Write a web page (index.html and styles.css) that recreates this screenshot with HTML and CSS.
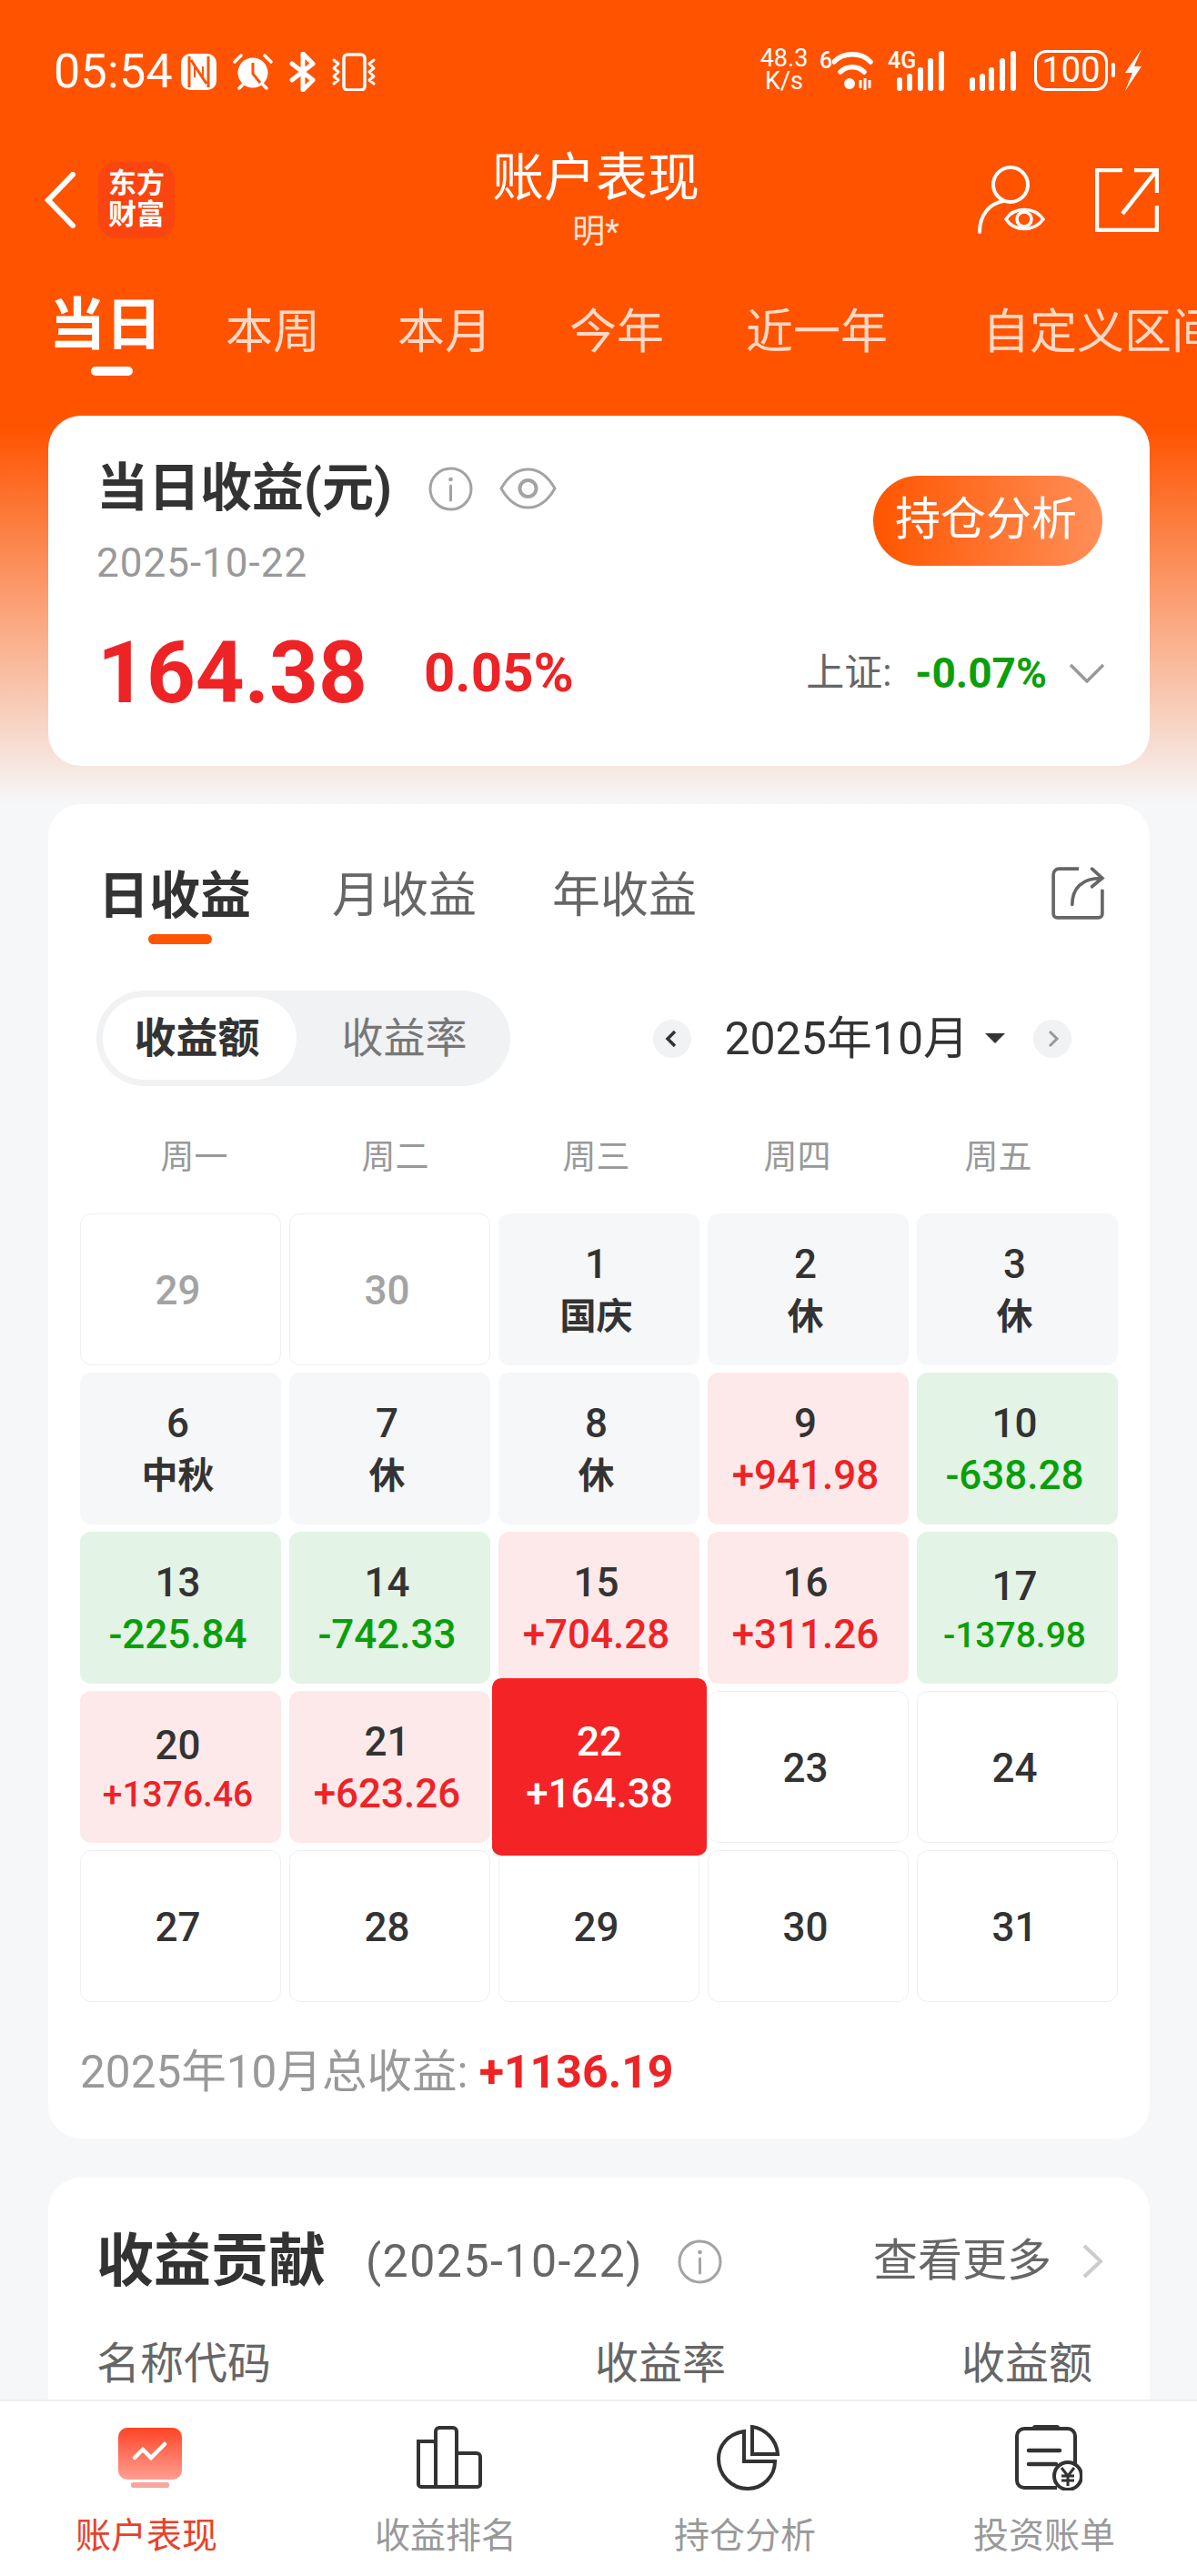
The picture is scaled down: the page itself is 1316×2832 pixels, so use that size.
FILE: index.html

```html
<!DOCTYPE html>
<html lang="zh-CN">
<head>
  <meta charset="UTF-8">
  <title>账户表现</title>
  <meta name="viewport" content="width=device-width, initial-scale=1.0">
  <link rel="stylesheet" href="styles.css">
</head>
<body>
  <div class="page">
    <div class="scroll">
      <div class="status">
        <div class="status-left">
          <span class="time">05:54</span>
          <svg class="ic-nfc" viewBox="0 0 39 40"><rect width="39" height="40" rx="10" fill="#fff"/><path d="M9 3v34M30 3v34M11 7l17 26" fill="none" stroke="#ff5300" stroke-width="3"/><path d="M15 12v14M24 14v14" fill="none" stroke="#ff5300" stroke-width="2"/></svg>
          <svg class="ic-alarm" viewBox="0 0 44 40"><circle cx="22" cy="21" r="16.5" fill="#fff"/><path d="M22 10v12l8 10" fill="none" stroke="#ff5300" stroke-width="3"/><path d="M2 9l7-7M42 9l-7-7M7 38l4-4M37 38l-4-4" fill="none" stroke="#fff" stroke-width="3.5" stroke-linecap="round"/></svg>
          <svg class="ic-bt" viewBox="0 0 30 44"><path d="M3 13l23 18-11 11V2l11 11L3 31" fill="none" stroke="#fff" stroke-width="5" stroke-linejoin="round" stroke-linecap="round"/></svg>
          <svg class="ic-vib" viewBox="0 0 52 42"><rect x="15" y="2" width="23" height="39" rx="4" fill="none" stroke="#fff" stroke-width="3.5"/><path d="M4 8l5 4-5 5 5 4-5 5 5 4-5 4M48 8l-5 4 5 5-5 4 5 5-5 4 5 4" fill="none" stroke="#fff" stroke-width="3" stroke-linecap="round" stroke-linejoin="round"/></svg>
        </div>
        <div class="status-right">
          <span class="speed">48.3<br>K/s</span>
          <span class="net net-wifi">6</span>
          <svg class="ic-wifi" viewBox="0 0 46 46"><path d="M2 14C12 3 32 3 42 14M9 25c7-7 19-7 26 0" fill="none" stroke="#fff" stroke-width="5.5" stroke-linecap="round"/><circle cx="19" cy="38" r="6" fill="#fff"/><path d="M31 34v9M36 32v13M41 34v9" stroke="#fff" stroke-width="3"/></svg>
          <span class="net net-sig">4G</span>
          <svg class="ic-sig" viewBox="0 0 54 46"><path d="M4 34v9M15 30v13M27 23v20M38 13v30M50 5v38" stroke="#fff" stroke-width="6" stroke-linecap="round"/></svg>
          <svg class="ic-sig2" viewBox="0 0 54 46"><path d="M4 34v9M15 30v13M25 23v20M37 13v30M49 5v38" stroke="#fff" stroke-width="6" stroke-linecap="round"/></svg>
          <span class="batt">100</span>
          <span class="batt-tip"></span>
          <svg class="ic-bolt" viewBox="0 0 22 46"><path d="M20 0L2 26h8L2 46l18-27h-8z" fill="#fff"/></svg>
        </div>
      </div>

      <div class="nav">
        <div class="nav-left">
          <svg class="ic-back" viewBox="0 0 36 62"><path d="M32 3L5 31l27 28" fill="none" stroke="#fff" stroke-width="6" stroke-linecap="round"/></svg>
          <div class="logo">东方<br>财富</div>
        </div>
        <div class="nav-mid">
          <div class="nav-title">账户表现</div>
          <div class="nav-sub">明*</div>
        </div>
        <div class="nav-right">
          <svg class="ic-user" viewBox="0 0 74 76"><circle cx="36" cy="22" r="19" fill="none" stroke="#fff" stroke-width="4"/><path d="M2 74c0-18 10-31 26-34" fill="none" stroke="#fff" stroke-width="4" stroke-linecap="round"/><path d="M31 60c9-14 31-14 41 0-10 14-32 14-41 0z" fill="#ff5300" stroke="#fff" stroke-width="3.5"/><circle cx="51" cy="60" r="8" fill="none" stroke="#fff" stroke-width="3.5"/></svg>
          <svg class="ic-ext" viewBox="0 0 70 70"><path d="M30 2H2v66h66V41M43 2h25v25M68 2L30 50" fill="none" stroke="#fff" stroke-width="4.5"/></svg>
        </div>
      </div>

      <div class="tabs">
        <div class="tab on">当日</div>
        <div class="tab">本周</div>
        <div class="tab">本月</div>
        <div class="tab">今年</div>
        <div class="tab t-near">近一年</div>
        <div class="tab t-custom">自定义区间</div>
      </div>

      <div class="card hero">
        <div class="hero-top">
          <div>
            <div class="hero-title">
              <span class="hero-name">当日收益(元)</span>
              <svg class="ic-info" viewBox="0 0 49 49"><circle cx="24.5" cy="24.5" r="22.5" fill="none" stroke="#a3a3a3" stroke-width="3"/><circle cx="24.5" cy="14" r="2.3" fill="#a3a3a3"/><path d="M24.5 21v16" stroke="#a3a3a3" stroke-width="3" stroke-linecap="round"/></svg>
              <svg class="ic-eye" viewBox="0 0 63 46"><path d="M2 23C10 9 20 2 31.500 2S53 9 61 23C53 37 43 44 31.500 44S10 37 2 23z" fill="none" stroke="#a3a3a3" stroke-width="3"/><circle cx="31.500" cy="23" r="9" fill="none" stroke="#a3a3a3" stroke-width="4"/></svg>
            </div>
            <div class="hero-date">2025-10-22</div>
          </div>
          <div class="hero-btn">持仓分析</div>
        </div>
        <div class="hero-nums">
          <span class="amount">164.38</span>
          <span class="rate">0.05%</span>
          <div class="index">
            <span class="index-name">上证:</span>
            <span class="index-val">-0.07%</span>
            <svg class="ic-down" viewBox="0 0 40 22"><path d="M2 2l18 18L38 2" fill="none" stroke="#999" stroke-width="3.500"/></svg>
          </div>
        </div>
      </div>

      <div class="card cal">
        <div class="cal-tabs">
          <div class="cal-tab on">日收益</div>
          <div class="cal-tab">月收益</div>
          <div class="cal-tab">年收益</div>
          <svg class="ic-share" viewBox="0 0 58 58"><path d="M30 3H9a6 6 0 0 0-6 6v42a4 4 0 0 0 4 4h44a4 4 0 0 0 4-4V25" fill="none" stroke="#666" stroke-width="3.500"/><path d="M23 41c0-17 10-28 31-28M44 3l11 10-11 9" fill="none" stroke="#666" stroke-width="3.500" stroke-linecap="round"/></svg>
        </div>

        <div class="cal-bar">
          <div class="seg">
            <div class="seg-item on">收益额</div>
            <div class="seg-item">收益率</div>
          </div>
          <div class="month">
            <span class="month-btn"><svg viewBox="0 0 42 42"><path d="M24 13l-8 8 8 8" fill="none" stroke="#333" stroke-width="3.500"/></svg></span>
            <span class="month-text">2025年10月</span>
            <span class="month-arrow"></span>
            <span class="month-btn"><svg viewBox="0 0 42 42"><path d="M18 13l8 8-8 8" fill="none" stroke="#999" stroke-width="3"/></svg></span>
          </div>
        </div>

        <div class="week">
          <span>周一</span><span>周二</span><span>周三</span><span>周四</span><span>周五</span>
        </div>

        <div class="grid">
          <div class="cell plain muted"><b>29</b></div>
          <div class="cell plain muted"><b>30</b></div>
          <div class="cell rest"><b>1</b><span>国庆</span></div>
          <div class="cell rest"><b>2</b><span>休</span></div>
          <div class="cell rest"><b>3</b><span>休</span></div>

          <div class="cell rest"><b>6</b><span>中秋</span></div>
          <div class="cell rest"><b>7</b><span>休</span></div>
          <div class="cell rest"><b>8</b><span>休</span></div>
          <div class="cell up"><b>9</b><span>+941.98</span></div>
          <div class="cell down"><b>10</b><span>-638.28</span></div>

          <div class="cell down"><b>13</b><span>-225.84</span></div>
          <div class="cell down"><b>14</b><span>-742.33</span></div>
          <div class="cell up"><b>15</b><span>+704.28</span></div>
          <div class="cell up"><b>16</b><span>+311.26</span></div>
          <div class="cell down long"><b>17</b><span>-1378.98</span></div>

          <div class="cell up long"><b>20</b><span>+1376.46</span></div>
          <div class="cell up"><b>21</b><span>+623.26</span></div>
          <div class="cell today"><b>22</b><span>+164.38</span></div>
          <div class="cell plain"><b>23</b></div>
          <div class="cell plain"><b>24</b></div>

          <div class="cell plain"><b>27</b></div>
          <div class="cell plain"><b>28</b></div>
          <div class="cell plain"><b>29</b></div>
          <div class="cell plain"><b>30</b></div>
          <div class="cell plain"><b>31</b></div>
        </div>

        <div class="total">2025年10月总收益: <b>+1136.19</b></div>
      </div>

      <div class="card contrib">
        <div class="contrib-head">
          <span class="contrib-title">收益贡献</span>
          <span class="contrib-date">(2025-10-22)</span>
          <svg class="ic-info" viewBox="0 0 49 49"><circle cx="24.5" cy="24.5" r="22.5" fill="none" stroke="#a3a3a3" stroke-width="3"/><circle cx="24.5" cy="14" r="2.3" fill="#a3a3a3"/><path d="M24.5 21v16" stroke="#a3a3a3" stroke-width="3" stroke-linecap="round"/></svg>
          <span class="more">查看更多</span>
          <svg class="ic-more" viewBox="0 0 24 38"><path d="M3 2l18 17L3 36" fill="none" stroke="#ccc" stroke-width="4"/></svg>
        </div>
        <div class="contrib-cols">
          <span class="col-name">名称代码</span>
          <span class="col-rate">收益率</span>
          <span class="col-amt">收益额</span>
        </div>
      </div>
    </div>

    <div class="tabbar">
      <div class="bar-item on">
        <svg class="bar-ic" viewBox="0 0 76 72"><defs><linearGradient id="chartFill" x1="0" y1="0" x2="0" y2="1"><stop offset="0" stop-color="#ff4426"/><stop offset="1" stop-color="#ff9f92"/></linearGradient></defs><rect x="3" y="3" width="70" height="57" rx="10" fill="url(#chartFill)"/><path d="M21 36l9-9 9 9 15-15" fill="none" stroke="#fff" stroke-width="4.500" stroke-linecap="round"/><rect x="17" y="63" width="42" height="6" rx="2" fill="#f9a79e"/></svg>
        <span>账户表现</span>
      </div>
      <div class="bar-item">
        <svg class="bar-ic" viewBox="0 0 76 72"><path d="M4 18h16a3 3 0 0 1 3 3v47H7a3 3 0 0 1-3-3zM23 7a4 4 0 0 1 4-4h15a4 4 0 0 1 4 4v61H23zM46 31h22a4 4 0 0 1 4 4v30a3 3 0 0 1-3 3H46z" fill="none" stroke="#333" stroke-width="4"/></svg>
        <span>收益排名</span>
      </div>
      <div class="bar-item">
        <svg class="bar-ic" viewBox="0 0 76 72"><path d="M33 7C14 10 5 24 5 37c0 18 14 33 32 33 17 0 30-14 30-30H33z" fill="none" stroke="#333" stroke-width="4"/><path d="M42 2c14 2 27 14 28 30H42z" fill="none" stroke="#333" stroke-width="4"/></svg>
        <span>持仓分析</span>
      </div>
      <div class="bar-item">
        <svg class="bar-ic" viewBox="0 0 76 72"><path d="M12 4h48a8 8 0 0 1 8 8v34M48 69H12a8 8 0 0 1-8-8V12a8 8 0 0 1 8-8" fill="none" stroke="#333" stroke-width="4"/><path d="M24 3h24" stroke="#333" stroke-width="6" stroke-linecap="round"/><path d="M17 28h34M17 43h30" stroke="#333" stroke-width="4.500" stroke-linecap="round"/><circle cx="60" cy="56" r="15" fill="#fff" stroke="#333" stroke-width="4"/><path d="M53 47l7 9 7-9M60 56v11M53 56h14M53 61h14" fill="none" stroke="#333" stroke-width="3"/></svg>
        <span>投资账单</span>
      </div>
    </div>
  </div>
</body>
</html>
```

FILE: styles.css

```css
* {
  box-sizing: border-box;
}
body {
  margin: 0;
  font-family: Roboto, "Noto Sans CJK SC", sans-serif;
  color: #333;
}
.page {
  width: 1316px;
  height: 2832px;
  display: flex;
  flex-direction: column;
  overflow: hidden;
}
.scroll {
  flex: 1;
  min-height: 0;
  overflow: hidden;
  background: linear-gradient(180deg, #ff5300 0, #ff5300 470px, #f6f7f9 884px);
}

/* status bar */
.status {
  height: 108px;
  padding: 52px 59px 0 59px;
  display: flex;
  justify-content: space-between;
  color: #fff;
}
.status-left, .status-right {
  display: flex;
  align-items: center;
  height: 50px;
}
.status-left {
  margin-top: 2px;
}
.time {
  font-size: 52px;
  line-height: 50px;
  letter-spacing: 0.3px;
}
.ic-nfc { width: 39px; height: 40px; margin-left: 9px; }
.ic-alarm { width: 44px; height: 40px; margin-left: 18px; }
.ic-bt { width: 30px; height: 44px; margin-left: 18px; }
.ic-vib { width: 52px; height: 42px; margin-left: 15px; }
.speed {
  font-size: 27px;
  line-height: 25px;
  text-align: center;
  width: 54px;
}
.net {
  align-self: flex-start;
  font-size: 25px;
  font-weight: 500;
  line-height: 26px;
  flex: none;
}
.net-wifi { width: 14px; margin-left: 12px; margin-top: 2px; }
.ic-wifi { width: 46px; height: 46px; margin-left: 0; }
.net-sig { width: 31px; margin-left: 15px; margin-right: -22px; margin-top: 2px; }
.ic-sig { width: 54px; height: 46px; }
.ic-sig2 { width: 54px; height: 46px; margin-left: 26px; }
.batt {
  width: 81px;
  height: 45px;
  margin-left: 18px;
  border: 3px solid #fff;
  border-radius: 13px;
  font-size: 38px;
  line-height: 39px;
  text-align: center;
}
.batt-tip {
  width: 4px;
  height: 16px;
  margin-left: 4px;
  background: #fff;
  border-radius: 2px;
}
.ic-bolt { width: 22px; height: 46px; margin-left: 9px; }

/* nav */
.nav {
  height: 115px;
  margin-top: 52px;
  padding: 0 42px 0 36px;
  display: grid;
  grid-template-columns: 1fr auto 1fr;
  align-items: center;
  color: #fff;
}
.nav-left {
  display: flex;
  align-items: center;
}
.ic-back { width: 36px; height: 62px; margin-left: 12px; }
.logo {
  width: 84px;
  height: 84px;
  margin-left: 24px;
  padding-top: 7px;
  border-radius: 20px;
  background: #fa4510;
  color: #fff;
  font-size: 31px;
  font-weight: 700;
  line-height: 34px;
  text-align: center;
}
.nav-mid {
  margin-top: 7px;
  text-align: center;
}
.nav-title {
  font-size: 57px;
  line-height: 58px;
}
.nav-sub {
  margin-top: 6px;
  font-size: 36px;
  line-height: 48px;
  color: #ffe6d9;
}
.nav-right {
  display: flex;
  justify-content: flex-end;
  align-items: center;
}
.ic-user { width: 74px; height: 76px; margin-top: -2px; }
.ic-ext { width: 70px; height: 70px; margin-left: 55px; }

/* period tabs */
.tabs {
  height: 180px;
  padding: 52px 0 0 54px;
  display: flex;
  align-items: flex-start;
  overflow: hidden;
  white-space: nowrap;
}
.tab {
  flex: none;
  margin-top: 13px;
  margin-left: 85px;
  font-size: 52px;
  line-height: 52px;
  color: #ffd9c6;
}
.tab.on {
  margin-top: 0;
  margin-left: 0;
  margin-right: -15px;
  font-size: 62px;
  line-height: 62px;
  font-weight: 700;
  color: #fff;
}
.tab.on::after {
  content: "";
  display: block;
  width: 46px;
  height: 10px;
  margin: 14px 0 0 46px;
  border-radius: 5px;
  background: #fff;
}
.t-near { margin-left: 90px; }
.t-custom { margin-left: 104px; }

/* cards */
.card {
  margin: 0 52px 0 53px;
  background: #fff;
  border-radius: 36px;
}
.hero {
  height: 385px;
  margin-top: 2px;
  padding: 0 52px 0 53px;
}
.hero-top {
  display: flex;
  justify-content: space-between;
  align-items: flex-start;
}
.hero-title {
  display: flex;
  align-items: center;
  height: 60px;
  margin-top: 50px;
}
.hero-name {
  font-size: 57px;
  line-height: 60px;
  font-weight: 700;
}
.ic-info { width: 49px; height: 49px; flex: none; }
.hero-title .ic-info { margin-left: 40px; }
.ic-eye { width: 63px; height: 46px; margin-left: 29px; }
.hero-date {
  margin-top: 27px;
  font-size: 44px;
  line-height: 50px;
  letter-spacing: 1px;
  color: #999;
}
.hero-btn {
  width: 252px;
  height: 99px;
  margin-top: 66px;
  padding-right: 4px;
  border-radius: 50px;
  background: linear-gradient(90deg, #ff5500, #ff8f58);
  color: #fff;
  font-size: 50px;
  line-height: 97px;
  text-align: center;
}
.hero-nums {
  display: flex;
  align-items: center;
  height: 90px;
  margin-top: 51px;
  padding-left: 1px;
}
.amount {
  font-size: 94px;
  font-weight: 700;
  line-height: 90px;
  color: #ee2326;
}
.rate {
  margin-left: 62px;
  font-size: 60px;
  font-weight: 700;
  line-height: 60px;
  color: #ee2326;
}
.index {
  margin-left: auto;
  display: flex;
  align-items: center;
}
.index-name {
  font-size: 42px;
  line-height: 50px;
  color: #666;
}
.index-val {
  margin-left: 26px;
  font-size: 46px;
  font-weight: 700;
  line-height: 50px;
  color: #0a9f0a;
}
.ic-down { width: 40px; height: 22px; margin-left: 24px; margin-right: -3px; }

/* calendar card */
.cal {
  height: 1467px;
  margin-top: 42px;
  padding: 0 35px;
}
.cal-tabs {
  display: flex;
  align-items: flex-start;
  height: 205px;
  padding: 71px 0 0 20px;
}
.cal-tab {
  margin-right: 83px;
  font-size: 53px;
  line-height: 60px;
  color: #666;
}
.cal-tab.on {
  margin-right: 89px;
  font-size: 56px;
  font-weight: 700;
  color: #333;
  position: relative;
}
.cal-tab.on::after {
  content: "";
  position: absolute;
  left: 55px;
  top: 72px;
  width: 70px;
  height: 11px;
  border-radius: 6px;
  background: #ff5500;
}
.ic-share {
  width: 60px;
  height: 60px;
  margin-left: auto;
  margin-right: 14px;
  margin-top: -3px;
}
.cal-bar {
  display: flex;
  justify-content: space-between;
  align-items: center;
  height: 105px;
  padding-left: 18px;
  padding-right: 51px;
}
.seg {
  display: flex;
  width: 455px;
  height: 105px;
  padding: 7px;
  border-radius: 53px;
  background: #f1f2f4;
}
.seg-item {
  width: 215px;
  height: 91px;
  padding-right: 6px;
  border-radius: 46px;
  font-size: 46px;
  line-height: 90px;
  text-align: center;
  color: #777;
}
.seg-item.on {
  background: #fff;
  font-weight: 700;
  color: #333;
}
.seg-item + .seg-item {
  margin-left: 15px;
}
.month {
  display: flex;
  align-items: center;
}
.month-btn {
  width: 42px;
  height: 42px;
  border-radius: 50%;
  background: #f1f2f4;
}
.month-btn svg { display: block; width: 42px; height: 42px; }
.month-text {
  margin-left: 36px;
  font-size: 50px;
  line-height: 56px;
}
.month-arrow {
  width: 0;
  height: 0;
  margin: 0 31px 0 18px;
  border-left: 11px solid transparent;
  border-right: 11px solid transparent;
  border-top: 11px solid #333;
}
.week {
  display: grid;
  grid-template-columns: repeat(5, 221px);
  height: 140px;
  padding: 54px 0 0 15px;
  font-size: 37px;
  line-height: 50px;
  text-align: center;
  color: #999;
}
.grid {
  display: grid;
  grid-template-columns: repeat(5, 221px);
  grid-auto-rows: 167px;
  column-gap: 9px;
  row-gap: 8px;
}
.cell {
  display: flex;
  flex-direction: column;
  align-items: center;
  justify-content: center;
  padding-top: 3px;
  padding-right: 6px;
  border-radius: 12px;
  font-size: 42px;
  line-height: 57px;
}
.cell b {
  font-size: 44px;
  font-weight: 500;
}
.cell span {
  font-size: 44px;
  font-weight: 500;
}
.plain { border: 1px solid #eeeff2; background: #fff; }
.muted b { color: #a3a3a3; }
.rest { background: #f6f7f9; }
.rest span { font-size: 40px; font-weight: 700; }
.up { background: #fde9e9; }
.up span { color: #ee2326; }
.down { background: #e3f3e5; }
.down span { color: #0a9f0a; }
.long span { font-size: 39px; line-height: 50px; }
.today {
  margin: -14px -8px -14px -7px;
  padding-right: 0;
  background: #f42426;
  color: #fff;
  border-radius: 10px;
  position: relative;
}
.total {
  margin-top: 47px;
  font-size: 49.5px;
  line-height: 60px;
  color: #999;
}
.total b {
  font-size: 50px;
  font-weight: 700;
  color: #ee2326;
}

/* contribution card */
.contrib {
  height: 400px;
  margin-top: 43px;
  padding: 57px 51px 0 53px;
}
.contrib-head {
  display: flex;
  align-items: center;
  height: 70px;
}
.contrib-title {
  font-size: 63px;
  font-weight: 700;
  line-height: 70px;
}
.contrib-date {
  margin-left: 44px;
  font-size: 50px;
  line-height: 60px;
  letter-spacing: 1.5px;
  color: #666;
}
.contrib .ic-info { margin-left: 38px; }
.more {
  margin-left: auto;
  font-size: 49px;
  line-height: 60px;
  color: #666;
}
.ic-more { width: 24px; height: 38px; margin-left: 33px; }
.contrib-cols {
  display: grid;
  grid-template-columns: 548px 1fr auto;
  margin-top: 48px;
  padding-right: 12px;
  font-size: 48px;
  line-height: 60px;
  color: #666;
}

/* bottom bar */
.tabbar {
  flex: none;
  height: 194px;
  border-top: 2px solid #eeeeee;
  background: #fff;
  display: grid;
  grid-template-columns: repeat(4, 329px);
}
.bar-item {
  display: flex;
  flex-direction: column;
  align-items: center;
  padding-top: 26px;
  padding-right: 7px;
  font-size: 39px;
  line-height: 50px;
  color: #999;
}
.bar-item.on { color: #e8412c; }
.bar-ic { width: 76px; height: 72px; margin-left: 8px; margin-bottom: 25px; }
```
